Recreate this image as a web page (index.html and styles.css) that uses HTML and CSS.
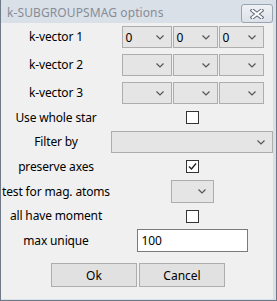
FILE: index.html
```html
<!DOCTYPE html>
<html lang="en">
<head>
  <meta charset="UTF-8">
  <title>k-SUBGROUPSMAG options</title>
  <link rel="stylesheet" href="styles.css">
</head>
<body>
  <div class="window">
    <div class="titlebar">
      <span class="title">k-SUBGROUPSMAG options</span>
      <span class="close">
        <svg width="14" height="10" viewBox="0 0 14 10">
          <path d="M2.5 1.5 L11.5 8.5 M11.5 1.5 L2.5 8.5" stroke="#5d6570" stroke-width="4" stroke-linecap="square"/>
          <path d="M2.5 1.5 L11.5 8.5 M11.5 1.5 L2.5 8.5" stroke="#ffffff" stroke-width="2" stroke-linecap="square"/>
        </svg>
      </span>
    </div>

    <div class="content">
      <div class="form">
        <div class="label">k-vector 1</div>
        <div class="field">
          <div class="triple">
            <div class="combo wide"><span>0</span><svg class="chev" width="8" height="5" viewBox="0 0 8 5"><path d="M0.5 0.5 L4 4 L7.5 0.5" fill="none" stroke="#555" stroke-width="1.2"/></svg></div>
            <div class="combo"><span>0</span><svg class="chev" width="8" height="5" viewBox="0 0 8 5"><path d="M0.5 0.5 L4 4 L7.5 0.5" fill="none" stroke="#555" stroke-width="1.2"/></svg></div>
            <div class="combo"><span>0</span><svg class="chev" width="8" height="5" viewBox="0 0 8 5"><path d="M0.5 0.5 L4 4 L7.5 0.5" fill="none" stroke="#555" stroke-width="1.2"/></svg></div>
          </div>
        </div>

        <div class="label">k-vector 2</div>
        <div class="field">
          <div class="triple">
            <div class="combo wide"><span></span><svg class="chev" width="8" height="5" viewBox="0 0 8 5"><path d="M0.5 0.5 L4 4 L7.5 0.5" fill="none" stroke="#555" stroke-width="1.2"/></svg></div>
            <div class="combo"><span></span><svg class="chev" width="8" height="5" viewBox="0 0 8 5"><path d="M0.5 0.5 L4 4 L7.5 0.5" fill="none" stroke="#555" stroke-width="1.2"/></svg></div>
            <div class="combo"><span></span><svg class="chev" width="8" height="5" viewBox="0 0 8 5"><path d="M0.5 0.5 L4 4 L7.5 0.5" fill="none" stroke="#555" stroke-width="1.2"/></svg></div>
          </div>
        </div>

        <div class="label">k-vector 3</div>
        <div class="field">
          <div class="triple">
            <div class="combo wide"><span></span><svg class="chev" width="8" height="5" viewBox="0 0 8 5"><path d="M0.5 0.5 L4 4 L7.5 0.5" fill="none" stroke="#555" stroke-width="1.2"/></svg></div>
            <div class="combo"><span></span><svg class="chev" width="8" height="5" viewBox="0 0 8 5"><path d="M0.5 0.5 L4 4 L7.5 0.5" fill="none" stroke="#555" stroke-width="1.2"/></svg></div>
            <div class="combo"><span></span><svg class="chev" width="8" height="5" viewBox="0 0 8 5"><path d="M0.5 0.5 L4 4 L7.5 0.5" fill="none" stroke="#555" stroke-width="1.2"/></svg></div>
          </div>
        </div>

        <div class="label">Use whole star</div>
        <div class="field check-row"><span class="check"></span></div>

        <div class="label">Filter by</div>
        <div class="field">
          <div class="combo filter"><span></span><svg class="chev" width="8" height="5" viewBox="0 0 8 5"><path d="M0.5 0.5 L4 4 L7.5 0.5" fill="none" stroke="#555" stroke-width="1.2"/></svg></div>
        </div>

        <div class="label">preserve axes</div>
        <div class="field check-row">
          <span class="check">
            <svg width="11" height="11" viewBox="0 0 11 11"><path d="M2 5.5 L4.5 8 L9 2.5" fill="none" stroke="#222" stroke-width="1.4"/></svg>
          </span>
        </div>

        <div class="label">test for mag. atoms</div>
        <div class="field">
          <div class="combo small"><span></span><svg class="chev" width="8" height="5" viewBox="0 0 8 5"><path d="M0.5 0.5 L4 4 L7.5 0.5" fill="none" stroke="#555" stroke-width="1.2"/></svg></div>
        </div>

        <div class="label">all have moment</div>
        <div class="field check-row last"><span class="check"></span></div>

        <div class="label">max unique</div>
        <div class="field">
          <div class="text-input">100</div>
        </div>
      </div>

      <div class="buttons">
        <button class="btn">Ok</button>
        <button class="btn">Cancel</button>
      </div>
    </div>
  </div>
</body>
</html>
```

FILE: styles.css
```css
body {
  margin: 0;
  padding: 0;
  font-family: 'Noto Sans', 'Open Sans', sans-serif;
  font-size: 12px;
  letter-spacing: -0.15px;
  color: #000;
  background: #ffffff;
}
.window {
  width: 277px;
  height: 301px;
  box-sizing: border-box;
  background-color: #dae0e8;
  border-left: 1px solid #6f7886;
  border-right: 1px solid #6f7886;
  border-bottom: 1px solid #6f7886;
  display: flex;
  flex-direction: column;
}
.titlebar {
  height: 23px;
  display: flex;
  align-items: flex-start;
  flex-shrink: 0;
}
.title {
  color: #868d97;
  padding: 5px 0 0 6px;
  line-height: 15px;
  letter-spacing: 0.1px;
}
.close {
  margin: 4px 3px 0 auto;
  width: 30px;
  height: 17px;
  border: 1px solid #9aa3b1;
  border-radius: 3px;
  background: linear-gradient(#eef1f5, #dde2e9);
  display: flex;
  align-items: center;
  justify-content: center;
}
.content {
  flex: 1;
  margin: 0 3px 1px 0;
  background-color: #f0f0f0;
}
.form {
  display: grid;
  grid-template-columns: 110px 162px;
  align-items: center;
  justify-items: center;
}
.label {
  white-space: nowrap;
  line-height: 16px;
}
.field {
  padding: 3px 0;
  display: flex;
}
.field.check-row {
  padding: 4px 0;
}
.field.check-row.last {
  padding: 4px 0 3px;
}
.triple {
  display: flex;
  gap: 1px;
  margin-left: 1px;
}
.combo {
  width: 45px;
  height: 22px;
  box-sizing: border-box;
  border: 1px solid #adadad;
  background-color: #e5e5e5;
  display: flex;
  align-items: center;
  justify-content: space-between;
  padding: 0 7px 0 3px;
}
.combo.wide {
  width: 50px;
}
.combo.filter {
  width: 162px;
  margin-left: -1px;
}
.combo.small {
  width: 43px;
  height: 23px;
}
.chev {
  display: block;
}
.check {
  width: 13px;
  height: 13px;
  box-sizing: border-box;
  border: 1px solid #333;
  background: #fff;
  display: flex;
  align-items: center;
  justify-content: center;
}
.text-input {
  width: 111px;
  height: 23px;
  box-sizing: border-box;
  border: 1px solid #7a7a7a;
  background: #fff;
  padding: 0 4px;
  line-height: 21px;
}
.buttons {
  display: flex;
  justify-content: center;
  gap: 2px;
  margin-top: 8px;
  padding-left: 2px;
}
.btn {
  width: 86px;
  height: 24px;
  border: 1px solid #adadad;
  background-color: #e1e1e1;
  font-family: inherit;
  font-size: 12px;
  color: #000;
  padding: 0;
}
```
